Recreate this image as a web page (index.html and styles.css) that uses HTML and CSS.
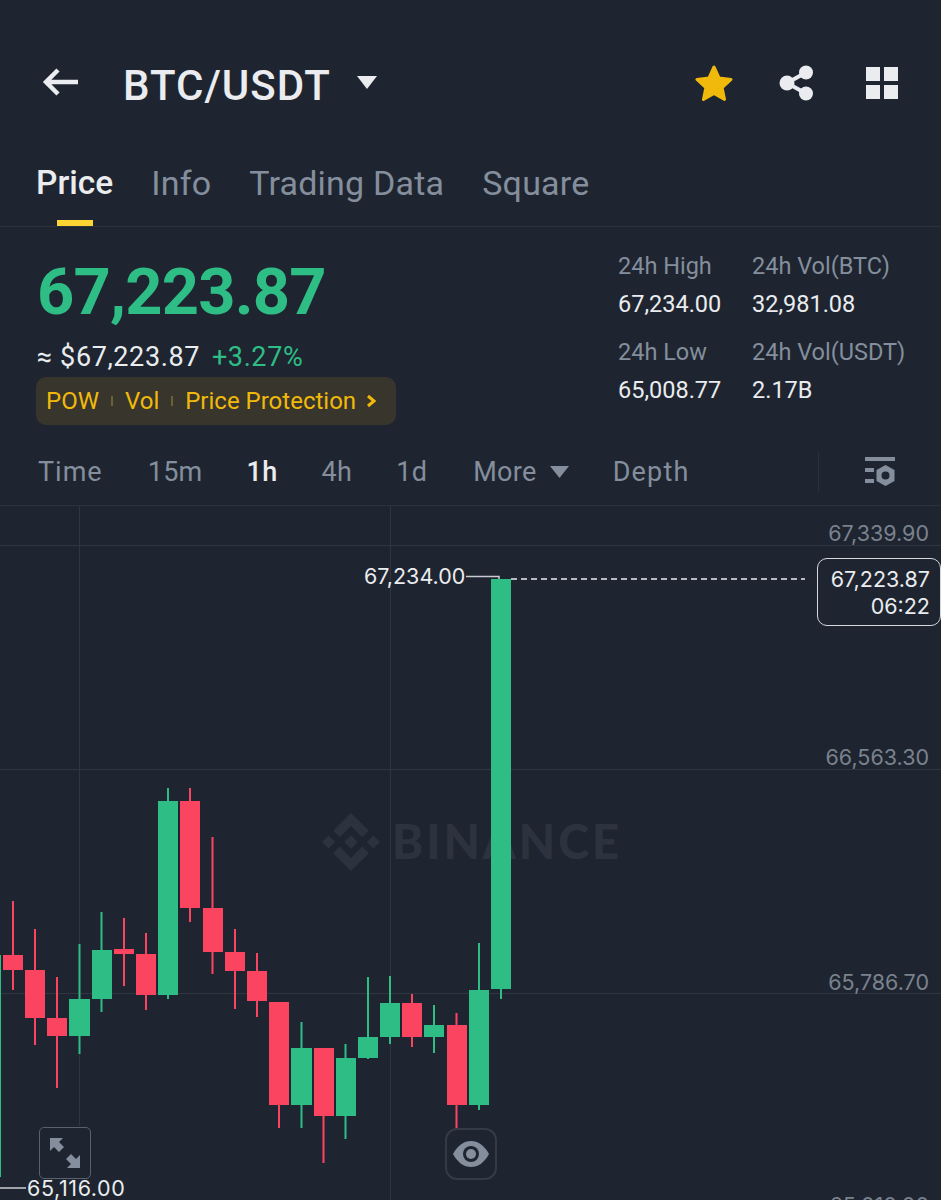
FILE: index.html
```html
<!DOCTYPE html>
<html lang="en">
<head>
  <meta charset="UTF-8" />
  <title>BTC/USDT</title>
  <link rel="stylesheet" href="styles.css">
</head>
<body>
  <header class="topbar">
    <svg class="back" width="38" height="30" viewBox="0 0 38 30"><path d="M36 15H4M16 3 4 15l12 12" fill="none" stroke="#eaecef" stroke-width="4.5"/></svg>
    <h1 class="pair">BTC/USDT</h1>
    <svg class="pair-caret" width="20" height="13" viewBox="0 0 20 13"><path d="M0 0h20L10 13z" fill="#eaecef"/></svg>
    <div class="topbar-icons">
      <svg width="38" height="37" viewBox="0 0 38 37"><path d="M19 2l5 10.900 12 1.500-8.900 8.200 2.400 11.800L19 28.500 8.500 34.400l2.400-11.800L2 14.400l12-1.500z" fill="#f0b90b" stroke="#f0b90b" stroke-width="3" stroke-linejoin="round"/></svg>
      <svg width="36" height="36" viewBox="0 0 36 36"><g fill="#eaecef"><circle cx="8" cy="18" r="7.500"/><circle cx="27" cy="7.500" r="7"/><circle cx="27" cy="28.500" r="7"/></g><path d="M27 7.500 8 18l19 10.500" fill="none" stroke="#eaecef" stroke-width="4"/></svg>
      <svg class="grid-icon" width="34" height="34" viewBox="0 0 34 34"><path d="M1 1h14v14H1zM19 1h14v14H19zM1 19h14v14H1zM19 19h14v14H19z" fill="#eaecef"/></svg>
    </div>
  </header>

  <nav class="tabs">
    <span class="tab active">Price</span>
    <span class="tab">Info</span>
    <span class="tab">Trading Data</span>
    <span class="tab">Square</span>
  </nav>

  <section class="summary">
    <div class="summary-left">
      <div class="last-price">67,223.87</div>
      <div class="sub-price">
        <span>≈ $67,223.87</span>
        <span class="change">+3.27%</span>
      </div>
      <div class="badge">
        <span>POW</span><i class="badge-sep"></i>
        <span>Vol</span><i class="badge-sep"></i>
        <span>Price Protection</span>
        <svg width="11" height="14" viewBox="0 0 11 14"><path d="M2 2l6 5-6 5" fill="none" stroke="#f0b90b" stroke-width="3"/></svg>
      </div>
    </div>
    <div class="stats">
      <div class="stat"><small>24h High</small><b>67,234.00</b></div>
      <div class="stat"><small>24h Vol(BTC)</small><b>32,981.08</b></div>
      <div class="stat"><small>24h Low</small><b>65,008.77</b></div>
      <div class="stat"><small>24h Vol(USDT)</small><b>2.17B</b></div>
    </div>
  </section>

  <div class="intervals">
    <span class="iv iv-time">Time</span>
    <span class="iv">15m</span>
    <span class="iv active">1h</span>
    <span class="iv">4h</span>
    <span class="iv">1d</span>
    <span class="iv iv-more">More <svg width="19" height="12" viewBox="0 0 19 12"><path d="M0 0h19l-9.500 12z" fill="#848e9c"/></svg></span>
    <span class="iv iv-depth">Depth</span>
    <i class="iv-sep"></i>
    <svg class="iv-settings" width="30" height="30" viewBox="0 0 30 30"><g fill="#848e9c"><path d="M0 0h30v4H0zM0 11h9v4H0zM0 22h9v4H0z"/><path d="M20.500 8l9 5v11l-9 5-9-5V13z"/></g><circle cx="20.500" cy="18.500" r="4" fill="#1e2530"/></svg>
  </div>

  <div class="chart">
    <svg class="chart-svg" width="941" height="694" viewBox="0 506 941 694">
      <g class="grid">
        <path d="M0 545.500H941M0 769.500H941M0 993.500H941M79.500 506V1126M390.500 506V1200"/>
      </g>

      <g class="watermark">
        <path transform="translate(322 813) scale(.458)" d="M38.730 53.200l24.590-24.580 24.600 24.600 14.300-14.310L63.320 0 24.430 38.900zM0 63.310l14.300-14.310 14.310 14.310-14.310 14.300zM38.730 73.410l24.590 24.590 24.600-24.600 14.310 14.290-38.900 38.910-38.910-38.880zM98 63.310l14.300-14.310 14.310 14.300-14.310 14.320zM77.830 63.300L63.320 48.780 48.810 63.300l14.510 14.500z"/>
        <text x="392" y="859">BINANCE</text>
      </g>

      <!-- red candles -->
      <g class="down">
        <path d="M13 901V990M35 929V1045M57 977V1088M124 918V986M146 933V1010M190 788V922M212.500 837V974M235 929V1009M257 953V1017M279 1002V1128M323.500 1048V1163M412 994V1047M456.500 1013V1139"/>
        <rect x="3" y="955" width="20" height="15"/>
        <rect x="25" y="970" width="20" height="48"/>
        <rect x="47" y="1018" width="20" height="18"/>
        <rect x="114" y="949" width="20" height="5"/>
        <rect x="136" y="954" width="20" height="41"/>
        <rect x="180" y="801" width="20" height="107"/>
        <rect x="203" y="908" width="20" height="44"/>
        <rect x="225" y="952" width="20" height="19"/>
        <rect x="247" y="971" width="20" height="30"/>
        <rect x="269" y="1002" width="20" height="103"/>
        <rect x="314" y="1048" width="20" height="68"/>
        <rect x="402" y="1003" width="20" height="34"/>
        <rect x="447" y="1025" width="20" height="80"/>
      </g>

      <!-- green candles -->
      <g class="up">
        <path d="M79.500 944V1054M101.500 912V1012M168 788V999M301.500 1022V1128M345.500 1044V1139M368 977V1059M390 976V1044M434 1005V1053M479 943V1110M501 579V999"/>
        <rect x="-1" y="955" width="2" height="222"/>
        <rect x="69" y="999" width="21" height="37"/>
        <rect x="92" y="950" width="20" height="49"/>
        <rect x="158" y="801" width="20" height="194"/>
        <rect x="291" y="1048" width="21" height="57"/>
        <rect x="336" y="1058" width="20" height="58"/>
        <rect x="358" y="1037" width="20" height="21"/>
        <rect x="380" y="1003" width="20" height="34"/>
        <rect x="424" y="1025" width="20" height="12"/>
        <rect x="469" y="990" width="20" height="115"/>
        <rect x="491" y="579" width="20" height="410"/>
      </g>

      <path class="leader" d="M466 576.500H499V579M0 1188H26"/>
      <path class="last-line" d="M511 579H805"/>

      <text class="axis" x="929" y="541">67,339.90</text>
      <text class="axis" x="929" y="765">66,563.30</text>
      <text class="axis" x="929" y="990">65,786.70</text>
      <text class="axis" x="929" y="1213">65,010.00</text>

      <text class="extreme" x="364" y="584">67,234.00</text>
      <text class="extreme extreme-low" x="27" y="1196">65,116.00</text>
    </svg>

    <div class="last-tag">67,223.87<br>06:22</div>

    <div class="chart-btn btn-expand">
      <svg width="32" height="32" viewBox="0 0 32 32"><path d="M1 1h13l-4 4 5 5-5 5-5-5-4 4zM31 31H18l4-4-5-5 5-5 5 5 4-4z" fill="#848e9c"/></svg>
    </div>
    <div class="chart-btn btn-eye">
      <svg width="36" height="28" viewBox="0 0 36 28"><path d="M0 14C5 5 11 1 18 1s13 4 18 13c-5 9-11 13-18 13S5 23 0 14z" fill="#848e9c"/><circle cx="18" cy="14" r="8" fill="#1e2530"/><circle cx="18" cy="14" r="5" fill="#848e9c"/></svg>
    </div>
  </div>
</body>
</html>
```

FILE: styles.css
```css
* {
  box-sizing: border-box;
}
html, body {
  margin: 0;
  height: 1200px;
  overflow: hidden;
}
body {
  font-family: Roboto, "Liberation Sans", sans-serif;
  background: #1e2530;
  color: #eaecef;
}

.topbar {
  display: flex;
  align-items: center;
  height: 76px;
  margin-top: 47px;
  padding: 0 42px;
}
.back {
  margin-right: 43px;
  margin-bottom: 6px;
}
.pair {
  margin: 0 26px 0 0;
  font-size: 42px;
  font-weight: 500;
  letter-spacing: 1px;
}
.pair-caret {
  margin-bottom: 5px;
}
.topbar-icons {
  display: flex;
  align-items: center;
  gap: 46px;
  margin-left: auto;
  margin-bottom: 4px;
}
.grid-icon {
  margin-left: 4px;
}

.tabs {
  display: flex;
  gap: 38px;
  height: 104px;
  padding: 40px 36px 0;
  border-bottom: 1px solid #2b3139;
  font-size: 34px;
  letter-spacing: .2px;
  color: #848e9c;
}
.tab {
  position: relative;
  height: 63px;
  line-height: 40px;
}
.tab.active {
  color: #eaecef;
  font-weight: 500;
  font-size: 33.500px;
  letter-spacing: 0;
}
.tab.active::after {
  content: "";
  position: absolute;
  left: 21px;
  bottom: 0;
  width: 36px;
  height: 6px;
  background: #fcd535;
}

.summary {
  display: flex;
  justify-content: space-between;
  height: 220px;
  padding: 21px 0 0 36px;
}
.last-price {
  height: 89px;
  padding-left: 1px;
  font-size: 65px;
  line-height: 89px;
  font-weight: 700;
  letter-spacing: -.8px;
  color: #2ebd85;
}
.sub-price {
  display: flex;
  gap: 12px;
  height: 40px;
  padding-left: 1px;
  font-size: 27px;
  line-height: 40px;
  letter-spacing: .6px;
}
.change {
  color: #2ebd85;
}
.badge {
  display: flex;
  align-items: center;
  width: 360px;
  height: 48px;
  padding: 0 10px;
  border-radius: 10px;
  background: #38352c;
  font-size: 24px;
  white-space: nowrap;
  color: #f0b90b;
}
.badge-sep {
  width: 2px;
  height: 10px;
  margin: 0 12px;
  background: #6b6232;
}
.badge svg {
  margin-left: 10px;
}

.stats {
  display: grid;
  grid-template-columns: 134px 189px;
  grid-auto-rows: 86px;
  margin-top: -1px;
}
.stat small {
  display: block;
  height: 38px;
  font-size: 23.500px;
  line-height: 38px;
  color: #848e9c;
}
.stat b {
  display: block;
  font-size: 23.500px;
  line-height: 38px;
  font-weight: 400;
}

.intervals {
  display: flex;
  align-items: center;
  height: 59px;
  padding: 0 46px 8px 38px;
  border-bottom: 1px solid #2b3139;
  font-size: 27px;
  letter-spacing: .3px;
  color: #848e9c;
}
.iv {
  margin-right: 44px;
}
.iv-time {
  margin-right: 45px;
  letter-spacing: 1px;
}
.iv.active {
  color: #eaecef;
  font-weight: 500;
}
.iv-more {
  margin-left: 2px;
  margin-right: 44px;
}
.iv-more svg {
  margin-left: 6px;
  vertical-align: 3px;
}
.iv-depth {
  margin-right: 0;
  letter-spacing: 1.200px;
}
.iv-sep {
  width: 1px;
  height: 40px;
  margin-left: auto;
  background: #2b3139;
}
.iv-settings {
  margin-left: 46px;
}

.chart {
  position: relative;
  height: 694px;
  overflow: hidden;
}
.chart-svg {
  display: block;
  font-family: Inter, "Liberation Sans", sans-serif;
}
.grid path {
  stroke: #2f3640;
  stroke-width: 1;
  fill: none;
}
.watermark {
  fill: #2c333e;
}
.watermark text {
  font-family: Lato, sans-serif;
  font-size: 47px;
  font-weight: 900;
  letter-spacing: 3px;
}
.up {
  fill: #2ebd85;
}
.up path {
  stroke: #2ebd85;
  stroke-width: 2;
}
.down {
  fill: #fb4560;
}
.down path {
  stroke: #fb4560;
  stroke-width: 2;
}
.leader {
  fill: none;
  stroke: #c9ccd1;
  stroke-width: 1.500;
}
.last-line {
  fill: none;
  stroke: #eaecef;
  stroke-width: 1.500;
  stroke-dasharray: 6 4;
}
.axis {
  font-size: 21.500px;
  fill: #7a828e;
  text-anchor: end;
}
.extreme {
  font-size: 21.500px;
  fill: #eaecef;
}
.extreme-low {
  letter-spacing: .6px;
}
.last-tag {
  position: absolute;
  top: 52px;
  right: 0;
  width: 124px;
  height: 68px;
  padding: 7px 10px 0 0;
  border: 1.500px solid #d5d8dc;
  border-radius: 10px;
  font-family: Inter, "Liberation Sans", sans-serif;
  font-size: 21.500px;
  line-height: 27px;
  text-align: right;
  background: #1e2530;
}
.chart-btn {
  position: absolute;
  display: flex;
  align-items: center;
  justify-content: center;
  width: 52px;
  height: 52px;
  border-radius: 8px;
  background: #1e2530;
}
.btn-expand {
  left: 39px;
  top: 621px;
  border: 1.500px solid #5a616c;
  border-radius: 5px;
}
.btn-eye {
  left: 445px;
  top: 622px;
  border: 2px solid #343b46;
  border-radius: 12px;
}
```
